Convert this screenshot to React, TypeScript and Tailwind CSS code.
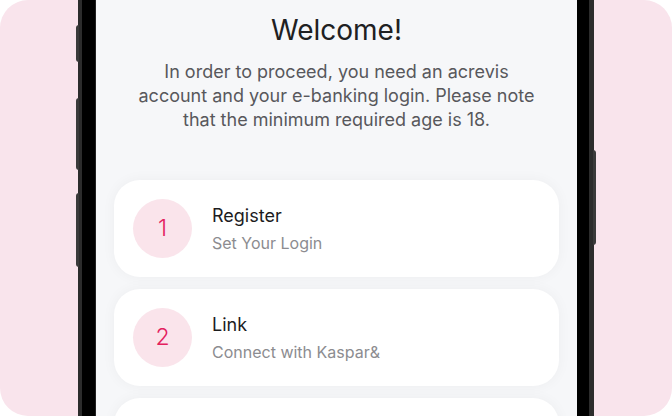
const steps = [
  { n: "1", title: "Register", sub: "Set Your Login" },
  { n: "2", title: "Link", sub: "Connect with Kaspar&" },
];

function StepCard(props: { n: string; title: string; sub: string }) {
  return (
    <div className="flex h-[97px] shrink-0 items-center gap-[20px] rounded-[26px] bg-white pl-[19px] shadow-[0_0_14px_rgba(20,30,50,0.045)]">
      <div className="flex h-[59px] w-[59px] items-center justify-center rounded-full bg-[#fae4eb] text-[23px] font-light text-[#e3215e]">
        {props.n}
      </div>
      <div className="flex flex-col gap-[4px]">
        <p className="text-[18px] leading-[24px] text-[#1c1c1e]">{props.title}</p>
        <p className="text-[16px] leading-[22px] text-[#8c8c90]">{props.sub}</p>
      </div>
    </div>
  );
}

export default function App() {
  return (
    <div className="h-[416px] w-[672px] overflow-hidden bg-white font-['Inter',sans-serif]">
      <div className="relative flex h-full w-full rounded-[28px] bg-[#f9e4ec]">
        {/* side buttons */}
        <div className="absolute left-[76px] top-[25px] h-[37px] w-[3px] rounded-l bg-[#3a3a3a]" />
        <div className="absolute left-[76px] top-[98px] h-[72px] w-[3px] rounded-l bg-[#3a3a3a]" />
        <div className="absolute left-[76px] top-[193px] h-[74px] w-[3px] rounded-l bg-[#3a3a3a]" />
        <div className="absolute left-[593px] top-[150px] h-[95px] w-[3px] rounded-r bg-[#3a3a3a]" />

        <div className="ml-[78px] flex h-full w-[516px] border-l-4 border-r-[5px] border-[#2c2c2c] bg-black pl-[13px] pr-[12px]">
          <div className="flex h-full w-[482px] flex-col overflow-hidden border-l border-[#222] bg-[#f6f7f9]">
            <h1 className="mt-[12px] text-center text-[28px] leading-[36px] text-[#202022]">
              Welcome!
            </h1>
            <p className="mt-[12px] text-center text-[18px] leading-[24px] text-[#58585c]">
              In order to proceed, you need an acrevis
              <br />
              account and your e-banking login. Please note
              <br />
              that the minimum required age is 18.
            </p>
            <div className="mx-[18px] mt-[48px] flex flex-col gap-[12px]">
              {steps.map((s) => (
                <StepCard key={s.n} n={s.n} title={s.title} sub={s.sub} />
              ))}
              <div className="h-[97px] shrink-0 rounded-[26px] bg-white shadow-[0_0_14px_rgba(20,30,50,0.045)]" />
            </div>
          </div>
        </div>
      </div>
    </div>
  );
}
